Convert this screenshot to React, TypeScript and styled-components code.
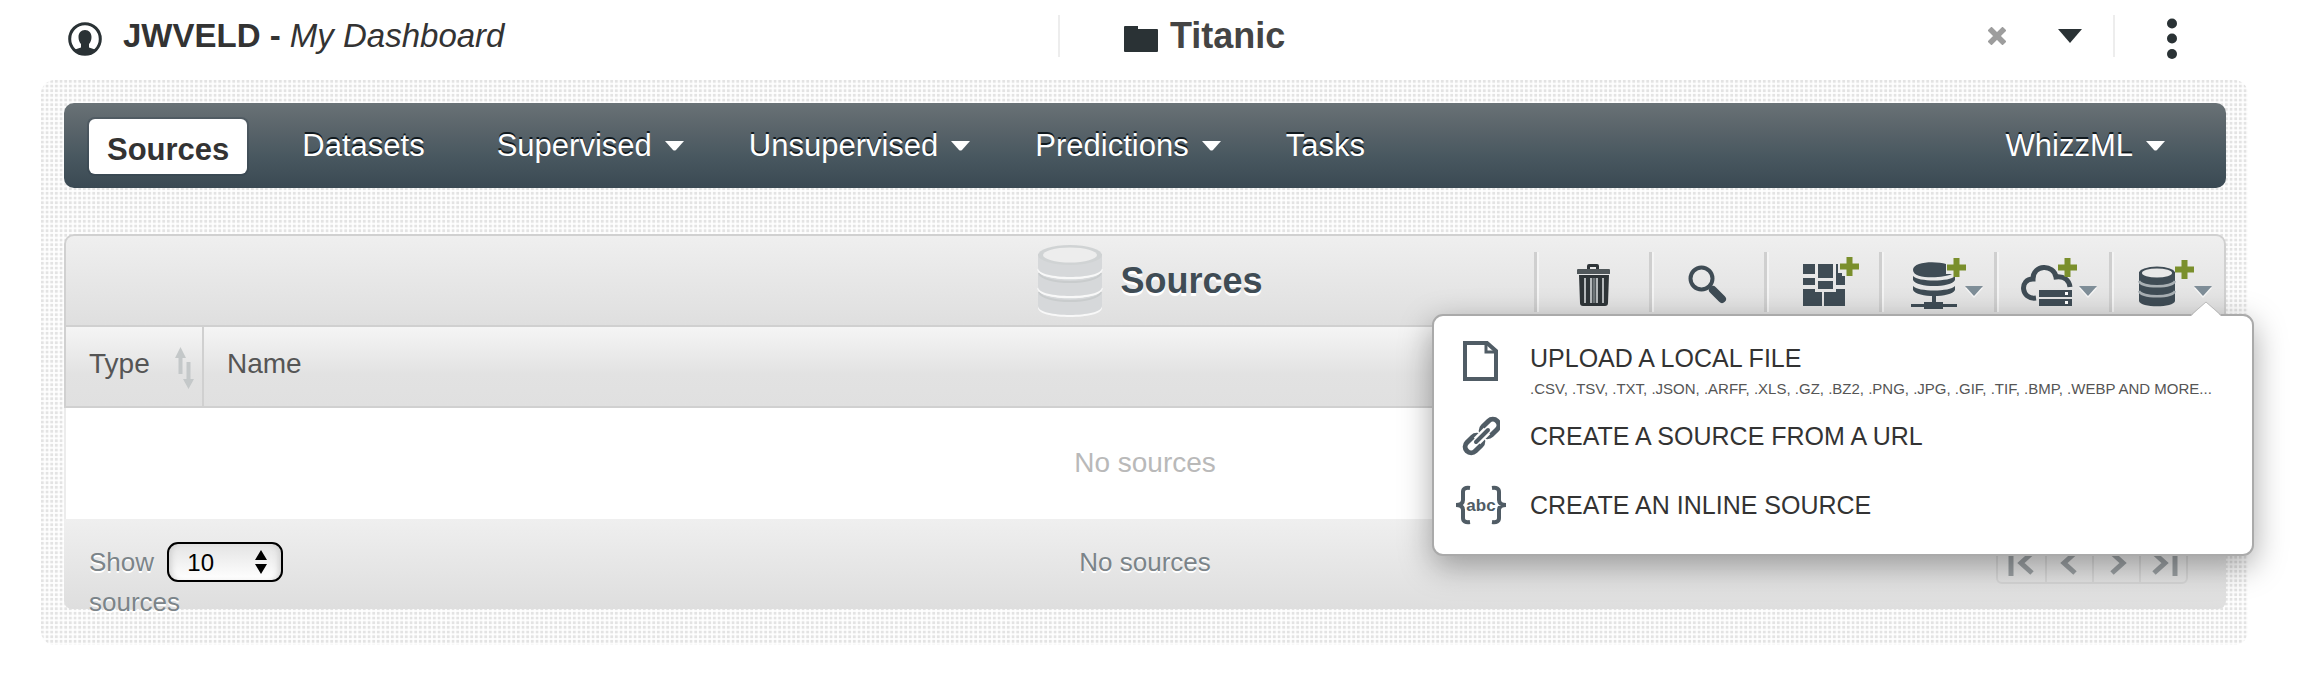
import React from 'react';
import styled, { createGlobalStyle, css } from 'styled-components';

const SLATE = '#3f4c55';
const INK = '#2a3235';
const GREEN = '#7a8f2c';

const GlobalStyle = createGlobalStyle`
  *, *::before, *::after { box-sizing: border-box; }
  body {
    margin: 0;
    background: #fff;
    color: #333;
    font-family: 'Liberation Sans', Arial, sans-serif;
  }
  svg { display: block; flex: none; }
`;

const Page = styled.div`
  padding: 0 68px 0 41px;
`;

/* ---------- top bar ---------- */

const TopBar = styled.header`
  display: grid;
  grid-template-columns: 1017fr 1190fr;
  padding: 15px 0 23px;
`;

const Account = styled.a`
  display: flex;
  align-items: center;
  gap: 21px;
  height: 42px;
  padding-left: 27px;
  color: #333;
  font-size: 33px;
  line-height: 42px;
  text-decoration: none;
  white-space: pre;

  svg { margin-top: 6px; }
`;

const Project = styled.div`
  display: flex;
  align-items: stretch;
  height: 42px;
  border-left: 2px solid #ededed;
`;

const ProjectName = styled.h1`
  display: flex;
  flex: 1;
  align-items: center;
  gap: 12px;
  margin: 0;
  padding-left: 64px;
  color: #444;
  font-size: 36px;
  line-height: 42px;

  svg { margin-top: 6px; }
`;

const IconButton = styled.button<{ $width: number; $divider?: boolean }>`
  display: flex;
  align-items: center;
  justify-content: center;
  width: ${(p) => p.$width}px;
  padding: 0;
  border: 0;
  ${(p) => p.$divider && css`
    padding-right: 20px;
    border-left: 2px solid #ededed;
  `}
  background: none;
  cursor: pointer;
`;

/* ---------- textured board ---------- */

const softGrid = (angle: string) => `linear-gradient(${angle},
    transparent 0 2px, rgba(255,255,255,.3) 2px 3px, rgba(255,255,255,.85) 3px 4px, rgba(255,255,255,.7) 4px 5px,
    transparent 5px 7px, rgba(255,255,255,.6) 7px 8px, rgba(255,255,255,.9) 8px 9px, rgba(255,255,255,.3) 9px 10px,
    transparent 10px 12px, rgba(255,255,255,.85) 12px 14px)`;

const Board = styled.main`
  padding: 23px 22px 36px 23px;
  border-radius: 14px;
  background-color: #e3e3e3;
  background-image: ${softGrid('90deg')}, ${softGrid('180deg')};
  background-size: 14px 14px;
`;

const Nav = styled.nav`
  display: flex;
  align-items: flex-start;
  justify-content: space-between;
  height: 85px;
  margin-bottom: 46px;
  padding: 16px 61px 0 25px;
  border-radius: 10px;
  background: linear-gradient(#697276, #5b656b 28%, #495860 62%, #3a4953);
`;

const NavList = styled.div`
  display: flex;
`;

const NavLink = styled.a<{ $after?: number }>`
  display: flex;
  align-items: center;
  gap: 13px;
  height: 53px;
  margin-right: ${(p) => p.$after ?? 0}px;
  color: #fff;
  font-size: 31px;
  line-height: 50px;
  text-decoration: none;
  text-shadow: 0 -2px 0 #111a1f;
`;

const ActiveNavLink = styled(NavLink)`
  height: 55px;
  padding: 6px 18px 0;
  border-radius: 6px;
  background: #fff;
  box-shadow: 0 0 0 2px rgba(45, 60, 72, 0.3);
  color: #333;
  font-weight: bold;
  text-shadow: none;
`;

/* ---------- sources panel ---------- */

const Panel = styled.section`
  border-radius: 10px;
`;

const PanelHeader = styled.div`
  position: relative;
  display: grid;
  grid-template-columns: 1fr auto 1fr;
  height: 91px;
  border: 2px solid #d0d0d0;
  border-bottom: 0;
  border-radius: 10px 10px 0 0;
  background: linear-gradient(#efefef, #dfdfdf);
`;

const PanelTitle = styled.h2`
  display: flex;
  grid-column: 2;
  align-items: center;
  gap: 17px;
  margin: 0;
  padding-left: 10px;
  color: ${SLATE};
  font-size: 36px;
  text-shadow: 0 3px 0 #fff;
`;

const Tools = styled.div`
  display: flex;
  justify-content: flex-end;
  padding-top: 16px;
`;

const ToolButton = styled.button`
  height: 60px;
  padding: 0;
  border: 0;
  border-left: 3px solid #cfcfcf;
  background: none;
  box-shadow: inset 2px 0 0 #f4f4f4;
  cursor: pointer;

  svg { margin-left: 2px; }
`;

const Table = styled.table`
  width: 100%;
  border-spacing: 0;
  border-collapse: separate;
  font-size: 28px;
`;

const Th = styled.th<{ $width?: number }>`
  width: ${(p) => (p.$width ? `${p.$width}px` : 'auto')};
  height: 83px;
  padding: 0 7px 5px 23px;
  border: solid #d0d0d0;
  border-width: 2px 0 2px 2px;
  background: linear-gradient(#f5f5f5, #e2e2e2 60%, #e0e0e0);
  color: #555;
  font-weight: normal;
  text-align: left;

  &:last-child { border-right-width: 2px; }
`;

const SortHeading = styled.button`
  display: flex;
  align-items: center;
  justify-content: space-between;
  width: 100%;
  padding: 0;
  border: 0;
  background: none;
  color: inherit;
  font: inherit;

  svg { margin-top: 8px; }
`;

const EmptyCell = styled.td`
  height: 111px;
  padding: 0 0 2px;
  border: solid #ececec;
  border-width: 0 2px;
  background: #fff;
  color: #b9b9b9;
  text-align: center;
`;

const Footer = styled.div`
  display: grid;
  grid-template-columns: 1fr auto 1fr;
  height: 90px;
  padding: 23px 38px 0 25px;
  border-radius: 0 0 8px 8px;
  background: linear-gradient(#efefef, #dedede);
  color: #7b8489;
  font-size: 26px;
  line-height: 40px;
  text-shadow: 0 2px 0 #fff;
`;

const PageSize = styled.label`
  width: 200px;
`;

const SelectWrap = styled.span`
  position: relative;
  display: inline-block;
  height: 40px;
  margin-left: 6px;
  vertical-align: top;

  svg {
    position: absolute;
    top: 8px;
    right: 16px;
    pointer-events: none;
  }
`;

const Select = styled.select`
  appearance: none;
  display: block;
  width: 116px;
  height: 40px;
  padding: 0 18px;
  border: 2px solid #000;
  border-radius: 11px;
  background: linear-gradient(#e4e4e4, #fff);
  box-shadow: inset 6px 0 6px -4px #ccc, inset -6px 0 6px -4px #ccc;
  color: #000;
  font: 24px 'Liberation Sans', Arial, sans-serif;
`;

const FooterStatus = styled.span`
  padding-left: 13px;
`;

const Pager = styled.div`
  display: flex;
  justify-self: end;
  height: 42px;
  border: 2px solid #d6d6d6;
  border-radius: 6px;
`;

const PagerButton = styled.button`
  display: flex;
  align-items: center;
  justify-content: center;
  width: 47px;
  padding: 0;
  border: 0;
  background: none;

  & + & { border-left: 2px solid #d6d6d6; }
`;

/* ---------- upload menu ---------- */

const Menu = styled.div`
  position: absolute;
  z-index: 2;
  top: 78px;
  right: -30px;
  width: 822px;
  padding-top: 22px;
  border: 2px solid #aaa;
  border-radius: 11px;
  background: #fff;
  box-shadow: 0 10px 32px rgba(0, 0, 0, 0.35);
`;

const MenuArrow = styled.svg`
  position: absolute;
  top: -16px;
  right: 30px;
`;

const MenuItem = styled.a`
  display: grid;
  grid-template-columns: 96px 1fr;
  min-height: 69px;
  color: #333;
  font-size: 25px;
  line-height: 40px;
  text-decoration: none;
`;

const MenuIcon = styled.span`
  display: flex;
  justify-content: center;
  height: 44px;
  padding-right: 2px;
`;

const MenuText = styled.span`
  display: flex;
  flex-direction: column;
  white-space: nowrap;
`;

const Hint = styled.small`
  padding-bottom: 16px;
  color: #555;
  font-size: 15px;
  line-height: 22px;
`;

/* ---------- drawings ---------- */

const Caret = () => (
  <svg width="19" height="10" viewBox="0 0 19 10"><path d="M0 0h19l-8 9q-1.500 1-3 0z" fill="#fff" /></svg>
);

const Plus = ({ x, y }: { x: number; y: number }) => (
  <path d={`M${x + 6.5} ${y}h6v6.500h6.500v6h-6.500v6.500h-6v-6.500h-6.500v-6h6.500z`} fill={GREEN} />
);

const ToolCaret = ({ x }: { x: number }) => (
  <>
    <path d={`M${x} 36h18l-9 10z`} fill="#f6f6f6" />
    <path d={`M${x} 34h18l-9 10z`} fill="#7f8e98" />
  </>
);

const ToolIcon = ({ children }: { children: React.ReactNode }) => (
  <svg width="110" height="60" viewBox="0 0 110 60" fill={SLATE}>{children}</svg>
);

const UserIcon = () => (
  <svg width="34" height="34" viewBox="0 0 34 34">
    <circle cx="17" cy="17" r="15.300" fill="none" stroke={INK} strokeWidth="3" />
    <path d="M17 8c4 0 6.500 3 6.500 7 0 3-1 5.500-2.500 7v3.500l7.500 2.500a16 16 0 0 1-23 0l7.500-2.500V22c-1.500-1.500-2.500-4-2.500-7 0-4 2.500-7 6.500-7z" fill={INK} />
  </svg>
);

const Cylinder = () => (
  <svg width="66" height="73" viewBox="0 0 66 73">
    {[40, 21, 2].map((y) => (
      <g key={y}>
        <path d={`M1 ${y + 9}v15c0 12 64 12 64 0v-15z`} fill="#f8f8f8" />
        <path d={`M1 ${y + 8}v14c0 12 64 12 64 0v-14z`} fill="#d6d8da" />
        <path d={`M2 ${y + 8}c4 12 58 12 62 0`} fill="none" stroke="#c9cccd" strokeWidth="2" />
        {y > 2 && <path d={`M1 ${y + 4}c4 12 60 12 64 0`} fill="none" stroke="#f4f5f5" strokeWidth="2.500" />}
      </g>
    ))}
    <ellipse cx="33" cy="11" rx="32" ry="10" fill="#d0d3d4" />
    <ellipse cx="33" cy="11" rx="27" ry="7.500" fill="#ededed" />
  </svg>
);

const SortIcon = () => (
  <svg width="20" height="42" viewBox="0 0 20 42" fill="#c4c8c9">
    <path d="M5.500 0l5.500 11h-3.500v16h-4v-16H0z" />
    <path d="M13.500 42l5.500-10h-3.500V15h-4v17H8z" />
  </svg>
);

const pagerShapes = [
  { label: 'First page', d: 'M3 0v26M24 3L13 13l11 10' },
  { label: 'Previous page', d: 'M19 3L8 13l11 10' },
  { label: 'Next page', d: 'M9 3l11 10L9 23' },
  { label: 'Last page', d: 'M4 3l11 10L4 23M25 0v26' },
];

const App = () => (
  <>
    <GlobalStyle />
    <Page>
      <TopBar>
        <Account href="#dashboard">
          <UserIcon />
          <span><strong>JWVELD -</strong> <em>My Dashboard</em></span>
        </Account>
        <Project>
          <ProjectName>
            <svg width="34" height="26" viewBox="0 0 34 26"><path d="M0 1q0-1 1-1h13v3h19q1 0 1 1v21q0 1-1 1H1q-1 0-1-1z" fill={INK} /></svg>
            Titanic
          </ProjectName>
          <IconButton $width={60} aria-label="Close project">
            <svg width="18" height="18" viewBox="0 0 18 18"><path d="M3.500 3.500l11 11M14.500 3.500l-11 11" stroke="#9d9d9d" strokeWidth="5.500" strokeLinecap="square" /></svg>
          </IconButton>
          <IconButton $width={86} aria-label="Choose project">
            <svg width="24" height="14" viewBox="0 0 24 14"><path d="M0 0h24L12 14z" fill={INK} /></svg>
          </IconButton>
          <IconButton $width={135} $divider aria-label="More options">
            <svg width="12" height="46" viewBox="0 0 12 46" fill={INK}>
              <circle cx="6" cy="10.500" r="5" /><circle cx="6" cy="25.500" r="5" /><circle cx="6" cy="41" r="5" />
            </svg>
          </IconButton>
        </Project>
      </TopBar>

      <Board>
        <Nav>
          <NavList>
            <ActiveNavLink href="#sources" $after={55}>Sources</ActiveNavLink>
            <NavLink href="#datasets" $after={72}>Datasets</NavLink>
            <NavLink href="#supervised" $after={65}>Supervised<Caret /></NavLink>
            <NavLink href="#unsupervised" $after={65}>Unsupervised<Caret /></NavLink>
            <NavLink href="#predictions" $after={65}>Predictions<Caret /></NavLink>
            <NavLink href="#tasks">Tasks</NavLink>
          </NavList>
          <NavLink href="#whizzml">WhizzML<Caret /></NavLink>
        </Nav>

        <Panel>
          <PanelHeader>
            <PanelTitle><Cylinder />Sources</PanelTitle>
            <Tools>
              <ToolButton aria-label="Delete">
                <ToolIcon>
                  <g fill="#2f3538">
                    <path d="M48 17v-3q0-2 2-2h8q2 0 2 2v3h-3v-2h-6v2z" />
                    <path d="M39 17h31q1 0 1 1v4H38v-4q0-1 1-1z" fill="#50575a" />
                    <path d="M40 23h30l-1 28q0 3-3 3H44q-3 0-3-3z" />
                    <path d="M46 26v25M52 26v25M58 26v25M64 26v25" stroke="#b4b8ba" strokeWidth="2" />
                    <path d="M55 26v25" stroke="#70777a" strokeWidth="3" />
                  </g>
                </ToolIcon>
              </ToolButton>
              <ToolButton aria-label="Search">
                <ToolIcon>
                  <circle cx="47.500" cy="26.500" r="11" fill="none" stroke={SLATE} strokeWidth="4" />
                  <path d="M59 38l9 9" stroke={SLATE} strokeWidth="8" strokeLinecap="round" />
                </ToolIcon>
              </ToolButton>
              <ToolButton aria-label="Create composite source">
                <ToolIcon>
                  <path d="M34 12h12v10H34zM34 26h12v7H34zM49 12h15v14H49zM49 29h15v8H49zM67 12h2v9h4v3h3v9h-9zM34 37h12v3h7v14H34zM55 40h12v-3h9v17H55z" />
                  <Plus x={71} y={5} />
                </ToolIcon>
              </ToolButton>
              <ToolButton aria-label="Create source from database">
                <ToolIcon>
                  <path d="M29 18c0-9 24-9 33-6v10h6c-7 4-39 6-39-4z" />
                  <path d="M29 24c5 6 37 6 42 0v4c-4 8-38 8-42 0zM29 34c5 6 37 6 42 0v4c-4 8-38 8-42 0z" />
                  <path d="M48 43h4v7h7v2h14v3H59v2H40v-2H27v-3h13v-2h8z" />
                  <Plus x={63} y={6} />
                  <ToolCaret x={81} />
                </ToolIcon>
              </ToolButton>
              <ToolButton aria-label="Create source from cloud storage">
                <ToolIcon>
                  <path d="M37 46c-15 2-17-19-3-19 0-15 21-15 23-2 8-1 13 3 14 10" fill="none" stroke={SLATE} strokeWidth="5" />
                  <path d="M40 38h33v7H40zM40 47h33v7H40z" />
                  <path d="M66 41.500h3M66 50.500h3" stroke="#fff" strokeWidth="3" />
                  <Plus x={59} y={6} />
                  <ToolCaret x={80} />
                </ToolIcon>
              </ToolButton>
              <ToolButton aria-label="Create source" aria-expanded="true">
                <ToolIcon>
                  <path d="M25 20v29c1 7 35 7 36 0V20z" />
                  <path d="M25 29c3 7 33 7 36 0M25 39c3 7 33 7 36 0" fill="none" stroke="#a9b0b4" strokeWidth="2.500" />
                  <ellipse cx="43" cy="21" rx="18" ry="6.500" />
                  <ellipse cx="43" cy="21" rx="15" ry="4.500" fill="#e8e8e8" />
                  <Plus x={61} y={8} />
                  <ToolCaret x={80} />
                </ToolIcon>
              </ToolButton>
            </Tools>

            <Menu>
              <MenuArrow width="32" height="18" viewBox="0 0 32 18">
                <path d="M1 16L16 2l15 14v2H1z" fill="#fff" />
                <path d="M1 15L16 2l15 13" fill="none" stroke="#bbb" />
              </MenuArrow>
              <MenuItem href="#upload">
                <MenuIcon>
                  <svg width="36" height="44" viewBox="0 0 36 44" fill="none" stroke="#505c65" strokeWidth="4">
                    <path d="M2 5h22l9 8v28H2z" /><path d="M23 5v9h10" strokeWidth="3" />
                  </svg>
                </MenuIcon>
                <MenuText>
                  UPLOAD A LOCAL FILE
                  <Hint>.CSV, .TSV, .TXT, .JSON, .ARFF, .XLS, .GZ, .BZ2, .PNG, .JPG, .GIF, .TIF, .BMP, .WEBP AND MORE...</Hint>
                </MenuText>
              </MenuItem>
              <MenuItem href="#url">
                <MenuIcon>
                  <svg width="38" height="40" viewBox="-1 -1 38 40" fill="none" stroke="#505c65" strokeWidth="5">
                    <rect x="-10" y="-6" width="20" height="12" rx="6" transform="translate(27 11) rotate(-45)" />
                    <rect x="-10" y="-6" width="20" height="12" rx="6" transform="translate(11 27) rotate(-45)" />
                    <path d="M14 24l10-10" stroke="#fff" strokeWidth="9" />
                    <path d="M13 25l12-12" strokeWidth="4" strokeLinecap="round" />
                  </svg>
                </MenuIcon>
                <MenuText>CREATE A SOURCE FROM A URL</MenuText>
              </MenuItem>
              <MenuItem href="#inline">
                <MenuIcon>
                  <svg width="52" height="40" viewBox="0 0 52 40" fill="none" stroke="#505c65" strokeWidth="4">
                    <path d="M15 3q-7-1-7 4v8q0 5-7 5 7 0 7 5v8q0 5 7 4M37 3q7-1 7 4v8q0 5 7 5-7 0-7 5v8q0 5-7 4" />
                    <text x="26" y="26" fill="#505c65" stroke="none" fontSize="17" fontWeight="bold" textAnchor="middle">abc</text>
                  </svg>
                </MenuIcon>
                <MenuText>CREATE AN INLINE SOURCE</MenuText>
              </MenuItem>
            </Menu>
          </PanelHeader>

          <Table>
            <thead>
              <tr>
                <Th $width={138} scope="col"><SortHeading>Type<SortIcon /></SortHeading></Th>
                <Th scope="col">Name</Th>
              </tr>
            </thead>
            <tbody>
              <tr><EmptyCell colSpan={2}>No sources</EmptyCell></tr>
            </tbody>
          </Table>

          <Footer>
            <PageSize>
              Show{' '}
              <SelectWrap>
                <Select defaultValue="10"><option>10</option><option>25</option><option>50</option></Select>
                <svg width="12" height="24" viewBox="0 0 12 24"><path d="M6 0l6 10H0zM6 24l6-10H0z" /></svg>
              </SelectWrap>{' '}
              sources
            </PageSize>
            <FooterStatus>No sources</FooterStatus>
            <Pager>
              {pagerShapes.map((shape) => (
                <PagerButton key={shape.label} aria-label={shape.label}>
                  <svg width="28" height="26" viewBox="0 0 28 26" fill="none" stroke="#9a9fa2" strokeWidth="5"><path d={shape.d} /></svg>
                </PagerButton>
              ))}
            </Pager>
          </Footer>
        </Panel>
      </Board>
    </Page>
  </>
);

export default App;
